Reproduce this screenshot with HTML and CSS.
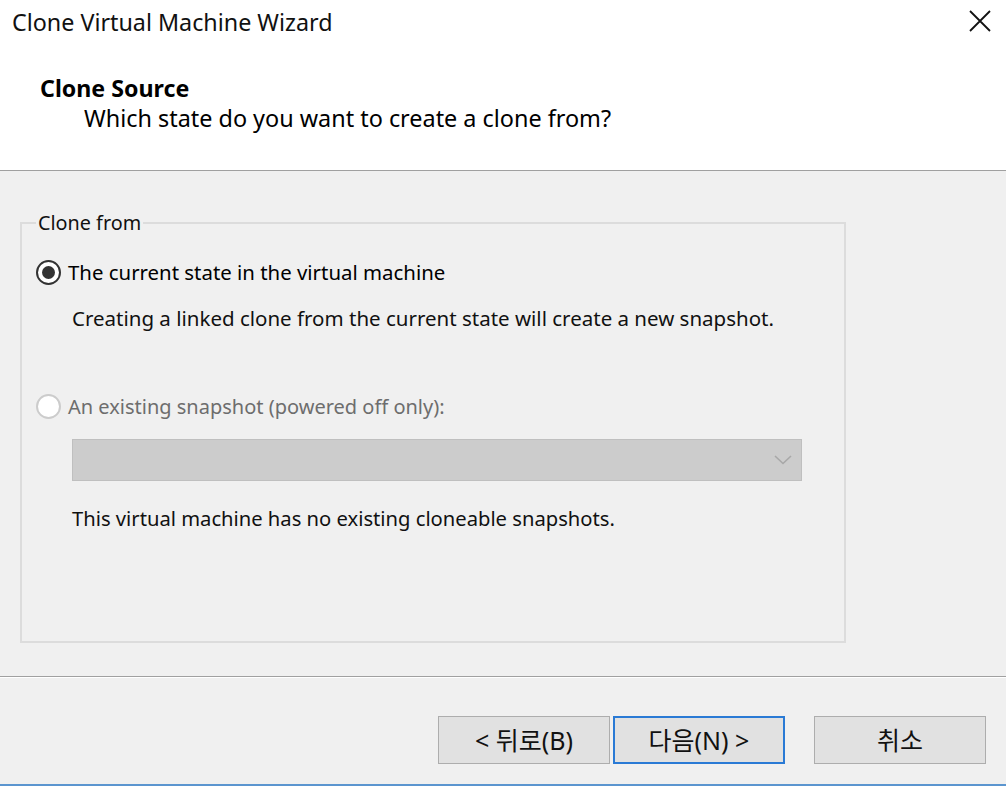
FILE: index.html
```html
<!DOCTYPE html>
<html lang="en">
<head>
<meta charset="utf-8">
<title>Clone Virtual Machine Wizard</title>
<link rel="stylesheet" href="styles.css">
</head>
<body>
<div class="window">
  <header class="header">
    <div class="titlebar">
      <span class="title">Clone Virtual Machine Wizard</span>
      <span class="close" aria-label="Close">
        <svg width="22" height="22" viewBox="0 0 22 22"><path d="M1 1 L21 21 M21 1 L1 21" stroke="#111" stroke-width="1.8" fill="none"/></svg>
      </span>
    </div>
    <div class="page-title">Clone Source</div>
    <div class="page-sub">Which state do you want to create a clone from?</div>
  </header>
  <main class="content">
    <fieldset class="group">
      <legend class="legend">Clone from</legend>
      <div class="option">
        <span class="radio checked"></span>
        <span class="label">The current state in the virtual machine</span>
      </div>
      <div class="note first-note">Creating a linked clone from the current state will create a new snapshot.</div>
      <div class="option disabled second">
        <span class="radio"></span>
        <span class="label">An existing snapshot (powered off only):</span>
      </div>
      <div class="combo">
        <svg class="chev" width="18" height="10" viewBox="0 0 18 10"><path d="M1 1 L9 8.5 L17 1" stroke="#a8a8a8" stroke-width="1.6" fill="none"/></svg>
      </div>
      <div class="note last-note">This virtual machine has no existing cloneable snapshots.</div>
    </fieldset>
  </main>
  <footer class="footer">
    <button class="btn">&lt; 뒤로(B)</button>
    <button class="btn default">다음(N) &gt;</button>
    <button class="btn cancel">취소</button>
  </footer>
</div>
</body>
</html>
```
FILE: styles.css
```css
* { box-sizing: border-box; }
html, body { margin: 0; padding: 0; }
body {
  width: 1006px;
  height: 786px;
  overflow: hidden;
  background: #f0f0f0;
  font-family: "Noto Sans", "Noto Sans CJK KR", sans-serif;
  color: #000;
}
.window {
  width: 1006px;
  height: 786px;
  display: flex;
  flex-direction: column;
  border-bottom: 2px solid #5b95cf;
}
.header {
  height: 171px;
  background: #fff;
  border-bottom: 1px solid #a0a0a0;
  box-shadow: inset 0 -1px 0 #ffffff;
  flex: none;
}
.titlebar {
  height: 44px;
  display: flex;
  align-items: center;
  justify-content: space-between;
  padding: 0 15px 0 12px;
}
.title {
  font-size: 23.3px;
  line-height: 28px;
  color: #111;
}
.close { display: flex; margin-top: -2px; }
.page-title {
  margin-top: 29px;
  padding-left: 40px;
  font-size: 23.2px;
  font-weight: bold;
  line-height: 30px;
}
.page-sub {
  padding-left: 84px;
  font-size: 23.4px;
  line-height: 30px;
}
.content {
  flex: 1;
  padding: 41px 160px 0 20px;
  border-bottom: 1px solid #a0a0a0;
  box-shadow: 0 1px 0 #fff;
}
.group {
  margin: 0;
  height: 431px;
  border: 2px solid #dcdcdc;
  padding: 0 0 0 14px;
}
.legend {
  font-size: 19.8px;
  padding: 0 2px;
  margin-left: 0;
  color: #111;
  line-height: 22px;
}
.option {
  display: flex;
  align-items: center;
  gap: 7px;
  margin-top: 25px;
  font-size: 20.4px;
  height: 26px;
}
.option.second { margin-top: 62px; }
.radio {
  width: 25px;
  height: 25px;
  border-radius: 50%;
  border: 2px solid #333;
  background: #fff;
  position: relative;
  flex: none;
}
.radio.checked::after {
  content: "";
  position: absolute;
  left: 4px; top: 4px;
  width: 13px; height: 13px;
  border-radius: 50%;
  background: #333;
}
.disabled .radio { border-color: #cccccc; }
.disabled .label { color: #6d6d6d; font-size: 20px; }
.note {
  font-size: 20.5px;
  padding-left: 36px;
  margin-top: 20px;
  line-height: 26px;
  color: #111;
}
.combo {
  margin: 20px 0 0 36px;
  width: 730px;
  height: 42px;
  background: #cccccc;
  border: 1px solid #bfbfbf;
  display: flex;
  align-items: center;
  justify-content: flex-end;
  padding-right: 9px;
}
.combo + .note { margin-top: 24px; }
.last-note { font-size: 20.2px; }
.footer {
  flex: none;
  height: 107px;
  display: flex;
  align-items: flex-start;
  padding: 39px 0 0 438px;
}
.btn {
  width: 172px;
  height: 48px;
  background: #e1e1e1;
  border: 1px solid #adadad;
  font-family: "Noto Sans", "Noto Sans CJK KR", sans-serif;
  font-size: 25px;
  line-height: 1;
  color: #111;
  padding: 0;
}
.btn.default {
  margin-left: 3px;
  border: 2px solid #2a7ad5;
}
.btn.cancel { margin-left: 29px; }
```
